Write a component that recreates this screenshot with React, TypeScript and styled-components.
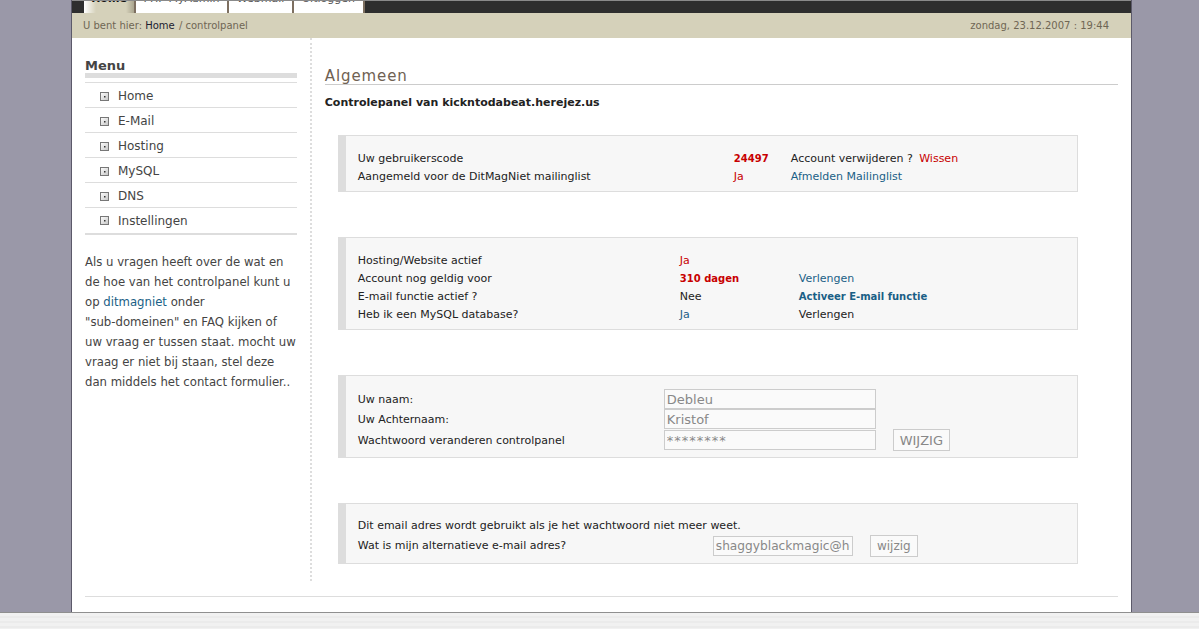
import React from "react"
import styled, { createGlobalStyle } from "styled-components"

const GlobalStyle = createGlobalStyle`
  html, body {
    margin: 0;
    height: 100%;
    overflow: hidden;
    background: #9a98a8;
    font-family: "DejaVu Sans", Verdana, sans-serif;
    font-size: 11px;
    color: #222;
  }
`

const Screen = styled.div`
  height: 100vh;
  display: flex;
  flex-direction: column;
`

const Stage = styled.div`
  flex: 1;
  min-height: 0;
  overflow: hidden;
  padding-left: 71px;
`

const Page = styled.div`
  width: 1059px;
  height: 100%;
  background: #fff;
  border-left: 1px solid #5c5a6a;
  border-right: 1px solid #5c5a6a;
`

const BottomBar = styled.div`
  height: 16px;
  border-top: 1px solid #8f8f8f;
  background: repeating-linear-gradient(#f1f1f1 0 3px, #ebebeb 3px 5px);
`

const TabBar = styled.nav`
  height: 12px;
  padding-left: 12px;
  display: flex;
  background: #2e2e2e;
  border-top: 1px solid #8a8a8a;
`

const Tab = styled.a<{ $width: number; $active?: boolean }>`
  width: ${p => p.$width}px;
  height: 12px;
  overflow: hidden;
  display: flex;
  flex-direction: column;
  justify-content: flex-end;
  align-items: center;
  box-sizing: border-box;
  padding-bottom: 7px;
  line-height: 14px;
  white-space: nowrap;
  color: ${p => (p.$active ? "#111" : "#555")};
  font-weight: ${p => (p.$active ? "bold" : "normal")};
  background: ${p =>
    p.$active
      ? "linear-gradient(90deg, #fff 0, #d5d1ba 12px, #d5d1ba 42px, #a9a48e 100%)"
      : "#fff"};
  border-right: 2px solid #7d6f60;
`

const Crumbs = styled.div`
  height: 25px;
  padding: 0 22px 0 11px;
  display: flex;
  align-items: center;
  justify-content: space-between;
  background: #d5d1ba;
  color: #6f6654;
  font-size: 10px;
`

const CrumbLink = styled.a`
  color: #1c1c30;
  margin-right: 1px;
`

const Columns = styled.div`
  display: flex;
`

const Sidebar = styled.aside`
  width: 212px;
  height: 543px;
  padding: 0 13px;
  border-right: 2px dotted #ddd;
`

const MenuTitle = styled.h3`
  margin: 20px 0 0;
  font-size: 13px;
  line-height: 15px;
  font-weight: bold;
  color: #444;
  border-bottom: 5px solid #ddd;
  height: 15px;
`

const MenuList = styled.ul`
  list-style: none;
  margin: 4px 0 0;
  padding: 0;
  border-top: 1px solid #ddd;
  border-bottom: 2px solid #ddd;
`

const MenuRow = styled.li`
  height: 25px;
  box-sizing: border-box;
  padding: 2px 0 0 15px;
  display: flex;
  align-items: center;
  gap: 9px;
  font-size: 12px;
  color: #444;
  border-bottom: 1px solid #ddd;
  &:last-child {
    border-bottom: 0;
    padding-top: 0;
  }
`

const SideText = styled.p`
  margin: 17px 0 0;
  font-size: 11.7px;
  line-height: 20px;
  color: #444;
`

const BlueLink = styled.a<{ $bold?: boolean }>`
  color: #1a5f86;
  font-weight: ${p => (p.$bold ? "bold" : "normal")};
  font-size: ${p => (p.$bold ? "10px" : "inherit")};
`

const Content = styled.main`
  width: 794px;
  padding: 0 13px;
`

const Title = styled.h2`
  margin: 29px 0 0;
  height: 17px;
  font-size: 15px;
  font-weight: normal;
  letter-spacing: 0.9px;
  line-height: 18px;
  color: #6f6152;
  border-bottom: 1px solid #ccc;
`

const Subtitle = styled.h4`
  margin: 11px 0 0;
  font-size: 11px;
  line-height: 14px;
  font-weight: bold;
  color: #222;
`

const Box = styled.section<{ $cols: string; $top: number; $bottom: number; $gap: number }>`
  width: 719px;
  margin: ${p => p.$gap}px 0 0 13px;
  padding: ${p => p.$top}px 0 ${p => p.$bottom}px 12px;
  display: grid;
  grid-template-columns: ${p => p.$cols};
  grid-auto-rows: 18px;
  align-items: center;
  background: #f7f7f7;
  border: 1px solid #ddd;
  border-left: 8px solid #ddd;
`

const FormBox = styled(Box)`
  grid-auto-rows: auto;
`

const Red = styled.span<{ $bold?: boolean }>`
  color: #c80000;
  font-weight: ${p => (p.$bold ? "bold" : "normal")};
  font-size: ${p => (p.$bold ? "10px" : "inherit")};
`

const ClearLink = styled(Red)`
  margin-left: 3px;
`

const Wide = styled.div`
  grid-column: 1 / -1;
  height: 18px;
  line-height: 18px;
`

const FieldLabel = styled.div<{ $drop?: number }>`
  line-height: 18px;
  padding-top: ${p => p.$drop ?? 0}px;
`

const Field = styled.input<{ $width: number; $size?: number; $spacing?: number }>`
  width: ${p => p.$width}px;
  height: 20px;
  box-sizing: border-box;
  padding: 0 2px;
  border: 1px solid #ccc;
  background: #fafafa;
  color: #888;
  font-family: "DejaVu Sans", Verdana, sans-serif;
  font-size: ${p => p.$size ?? 13}px;
  letter-spacing: ${p => p.$spacing ?? 0}px;
  outline: none;
  display: block;
`

const SaveButton = styled.button<{ $width: number; $size: number }>`
  width: ${p => p.$width}px;
  height: 22px;
  padding: 0;
  border: 1px solid #ccc;
  background: #fafafa;
  color: #888;
  font-family: "DejaVu Sans", Verdana, sans-serif;
  font-size: ${p => p.$size}px;
`

const BottomRule = styled.hr`
  margin: 15px 13px 0 13px;
  border: 0;
  border-top: 1px solid #ddd;
`

const Bullet = () => (
  <svg width="9" height="9" viewBox="0 0 9 9">
    <defs>
      <linearGradient id="bulletFill" x1="0" y1="0" x2="1" y2="1">
        <stop offset="0" stopColor="#fff" />
        <stop offset="1" stopColor="#c4c4c4" />
      </linearGradient>
    </defs>
    <rect x="0.5" y="0.5" width="8" height="8" fill="url(#bulletFill)" stroke="#777" />
    <rect x="4" y="4" width="1.5" height="1.5" fill="#333" />
  </svg>
)

const menuItems = ["Home", "E-Mail", "Hosting", "MySQL", "DNS", "Instellingen"]

const App = () => {
  return (
    <Screen>
      <GlobalStyle />
      <Stage>
        <Page>
          <TabBar>
            <Tab $width={52} $active>Home</Tab>
            <Tab $width={93}>PHP MyAdmin</Tab>
            <Tab $width={65}>Webmail</Tab>
            <Tab $width={71}>Uitloggen</Tab>
          </TabBar>
          <Crumbs>
            <span>
              U bent hier: <CrumbLink>Home</CrumbLink> / controlpanel
            </span>
            <span>zondag, 23.12.2007 : 19:44</span>
          </Crumbs>
          <Columns>
            <Sidebar>
              <MenuTitle>Menu</MenuTitle>
              <MenuList>
                {menuItems.map(item => (
                  <MenuRow key={item}>
                    <Bullet />
                    {item}
                  </MenuRow>
                ))}
              </MenuList>
              <SideText>
                Als u vragen heeft over de wat en
                <br />
                de hoe van het controlpanel kunt u
                <br />
                op <BlueLink>ditmagniet</BlueLink> onder
                <br />
                "sub-domeinen" en FAQ kijken of
                <br />
                uw vraag er tussen staat. mocht uw
                <br />
                vraag er niet bij staan, stel deze
                <br />
                dan middels het contact formulier..
              </SideText>
            </Sidebar>
            <Content>
              <Title>Algemeen</Title>
              <Subtitle>Controlepanel van kickntodabeat.herejez.us</Subtitle>

              <Box $cols="376px 57px 1fr" $top={13} $bottom={6} $gap={25}>
                <span>Uw gebruikerscode</span>
                <Red $bold>24497</Red>
                <span>
                  Account verwijderen ? <ClearLink>Wissen</ClearLink>
                </span>
                <span>Aangemeld voor de DitMagNiet mailinglist</span>
                <Red>Ja</Red>
                <BlueLink>Afmelden Mailinglist</BlueLink>
              </Box>

              <Box $cols="322px 119px 1fr" $top={13} $bottom={6} $gap={45}>
                <span>Hosting/Website actief</span>
                <Red>Ja</Red>
                <span />
                <span>Account nog geldig voor</span>
                <Red $bold>310 dagen</Red>
                <BlueLink>Verlengen</BlueLink>
                <span>E-mail functie actief ?</span>
                <span>Nee</span>
                <BlueLink $bold>Activeer E-mail functie</BlueLink>
                <span>Heb ik een MySQL database?</span>
                <BlueLink>Ja</BlueLink>
                <span>Verlengen</span>
              </Box>

              <FormBox $cols="306px 229px 1fr" $top={13} $bottom={6} $gap={45}>
                <FieldLabel $drop={2}>Uw naam:</FieldLabel>
                <Field $width={212} defaultValue="Debleu" readOnly />
                <span />
                <FieldLabel $drop={2}>Uw Achternaam:</FieldLabel>
                <Field $width={212} defaultValue="Kristof" readOnly />
                <span />
                <FieldLabel $drop={2}>Wachtwoord veranderen controlpanel</FieldLabel>
                <Field $width={212} $spacing={1} defaultValue="********" readOnly />
                <SaveButton $width={57} $size={13}>WIJZIG</SaveButton>
              </FormBox>

              <FormBox $cols="355px 157px 1fr" $top={13} $bottom={6} $gap={45}>
                <Wide>Dit email adres wordt gebruikt als je het wachtwoord niet meer weet.</Wide>
                <FieldLabel>Wat is mijn alternatieve e-mail adres?</FieldLabel>
                <Field $width={140} $size={12.2} defaultValue="shaggyblackmagic@hotmail.com" readOnly />
                <SaveButton $width={48} $size={12}>wijzig</SaveButton>
              </FormBox>
            </Content>
          </Columns>
          <BottomRule />
        </Page>
      </Stage>
      <BottomBar />
    </Screen>
  )
}

export default App
